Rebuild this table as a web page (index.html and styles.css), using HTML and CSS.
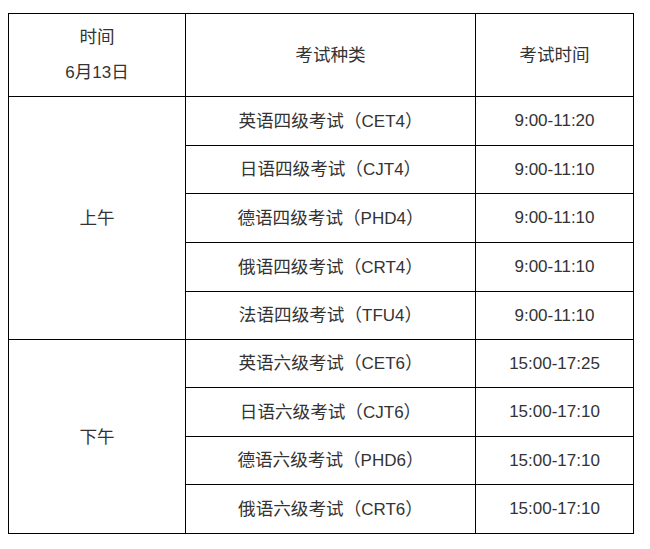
FILE: index.html
```html
<!DOCTYPE html>
<html lang="zh">
<head>
<meta charset="utf-8">
<link rel="stylesheet" href="styles.css">
</head>
<body>
<div class="grid">
  <div class="cell head"><div class="zh">时间</div><div>6<span class="zh">月</span>13<span class="zh">日</span></div></div>
  <div class="cell"><span class="zh">考试种类</span></div>
  <div class="cell"><span class="zh">考试时间</span></div>

  <div class="cell am"><span class="zh">上午</span></div>
  <div class="cell"><span><span class="zh">英语四级考试（</span>CET4<span class="zh">）</span></span></div>
  <div class="cell">9:00-11:20</div>
  <div class="cell"><span><span class="zh">日语四级考试（</span>CJT4<span class="zh">）</span></span></div>
  <div class="cell">9:00-11:10</div>
  <div class="cell"><span><span class="zh">德语四级考试（</span>PHD4<span class="zh">）</span></span></div>
  <div class="cell">9:00-11:10</div>
  <div class="cell"><span><span class="zh">俄语四级考试（</span>CRT4<span class="zh">）</span></span></div>
  <div class="cell">9:00-11:10</div>
  <div class="cell"><span><span class="zh">法语四级考试（</span>TFU4<span class="zh">）</span></span></div>
  <div class="cell">9:00-11:10</div>

  <div class="cell pm"><span class="zh">下午</span></div>
  <div class="cell"><span><span class="zh">英语六级考试（</span>CET6<span class="zh">）</span></span></div>
  <div class="cell">15:00-17:25</div>
  <div class="cell"><span><span class="zh">日语六级考试（</span>CJT6<span class="zh">）</span></span></div>
  <div class="cell">15:00-17:10</div>
  <div class="cell"><span><span class="zh">德语六级考试（</span>PHD6<span class="zh">）</span></span></div>
  <div class="cell">15:00-17:10</div>
  <div class="cell"><span><span class="zh">俄语六级考试（</span>CRT6<span class="zh">）</span></span></div>
  <div class="cell">15:00-17:10</div>
</div>
</body>
</html>
```

FILE: styles.css
```css
html, body {
  margin: 0;
  background: #fff;
}
body {
  padding: 13px 0 0 8px;
  font-family: "Liberation Sans", "Noto Sans CJK SC", sans-serif;
  font-size: 17px;
  color: #333;
}
.grid {
  display: grid;
  width: 624px;
  grid-template-columns: 176px 289px 157px;
  grid-template-rows: 82px 48px 47px 48px 48px 47px 47px 48px 47px 48px;
  gap: 1px;
  padding: 1px;
  background: #000;
}
.cell {
  background: #fff;
  display: flex;
  flex-direction: column;
  align-items: center;
  justify-content: center;
  text-align: center;
  line-height: 24px;
}
.zh {
  font-size: 17.6px;
}
.head {
  line-height: 35px;
}
.am {
  grid-row: span 5;
}
.pm {
  grid-row: span 4;
}
```
